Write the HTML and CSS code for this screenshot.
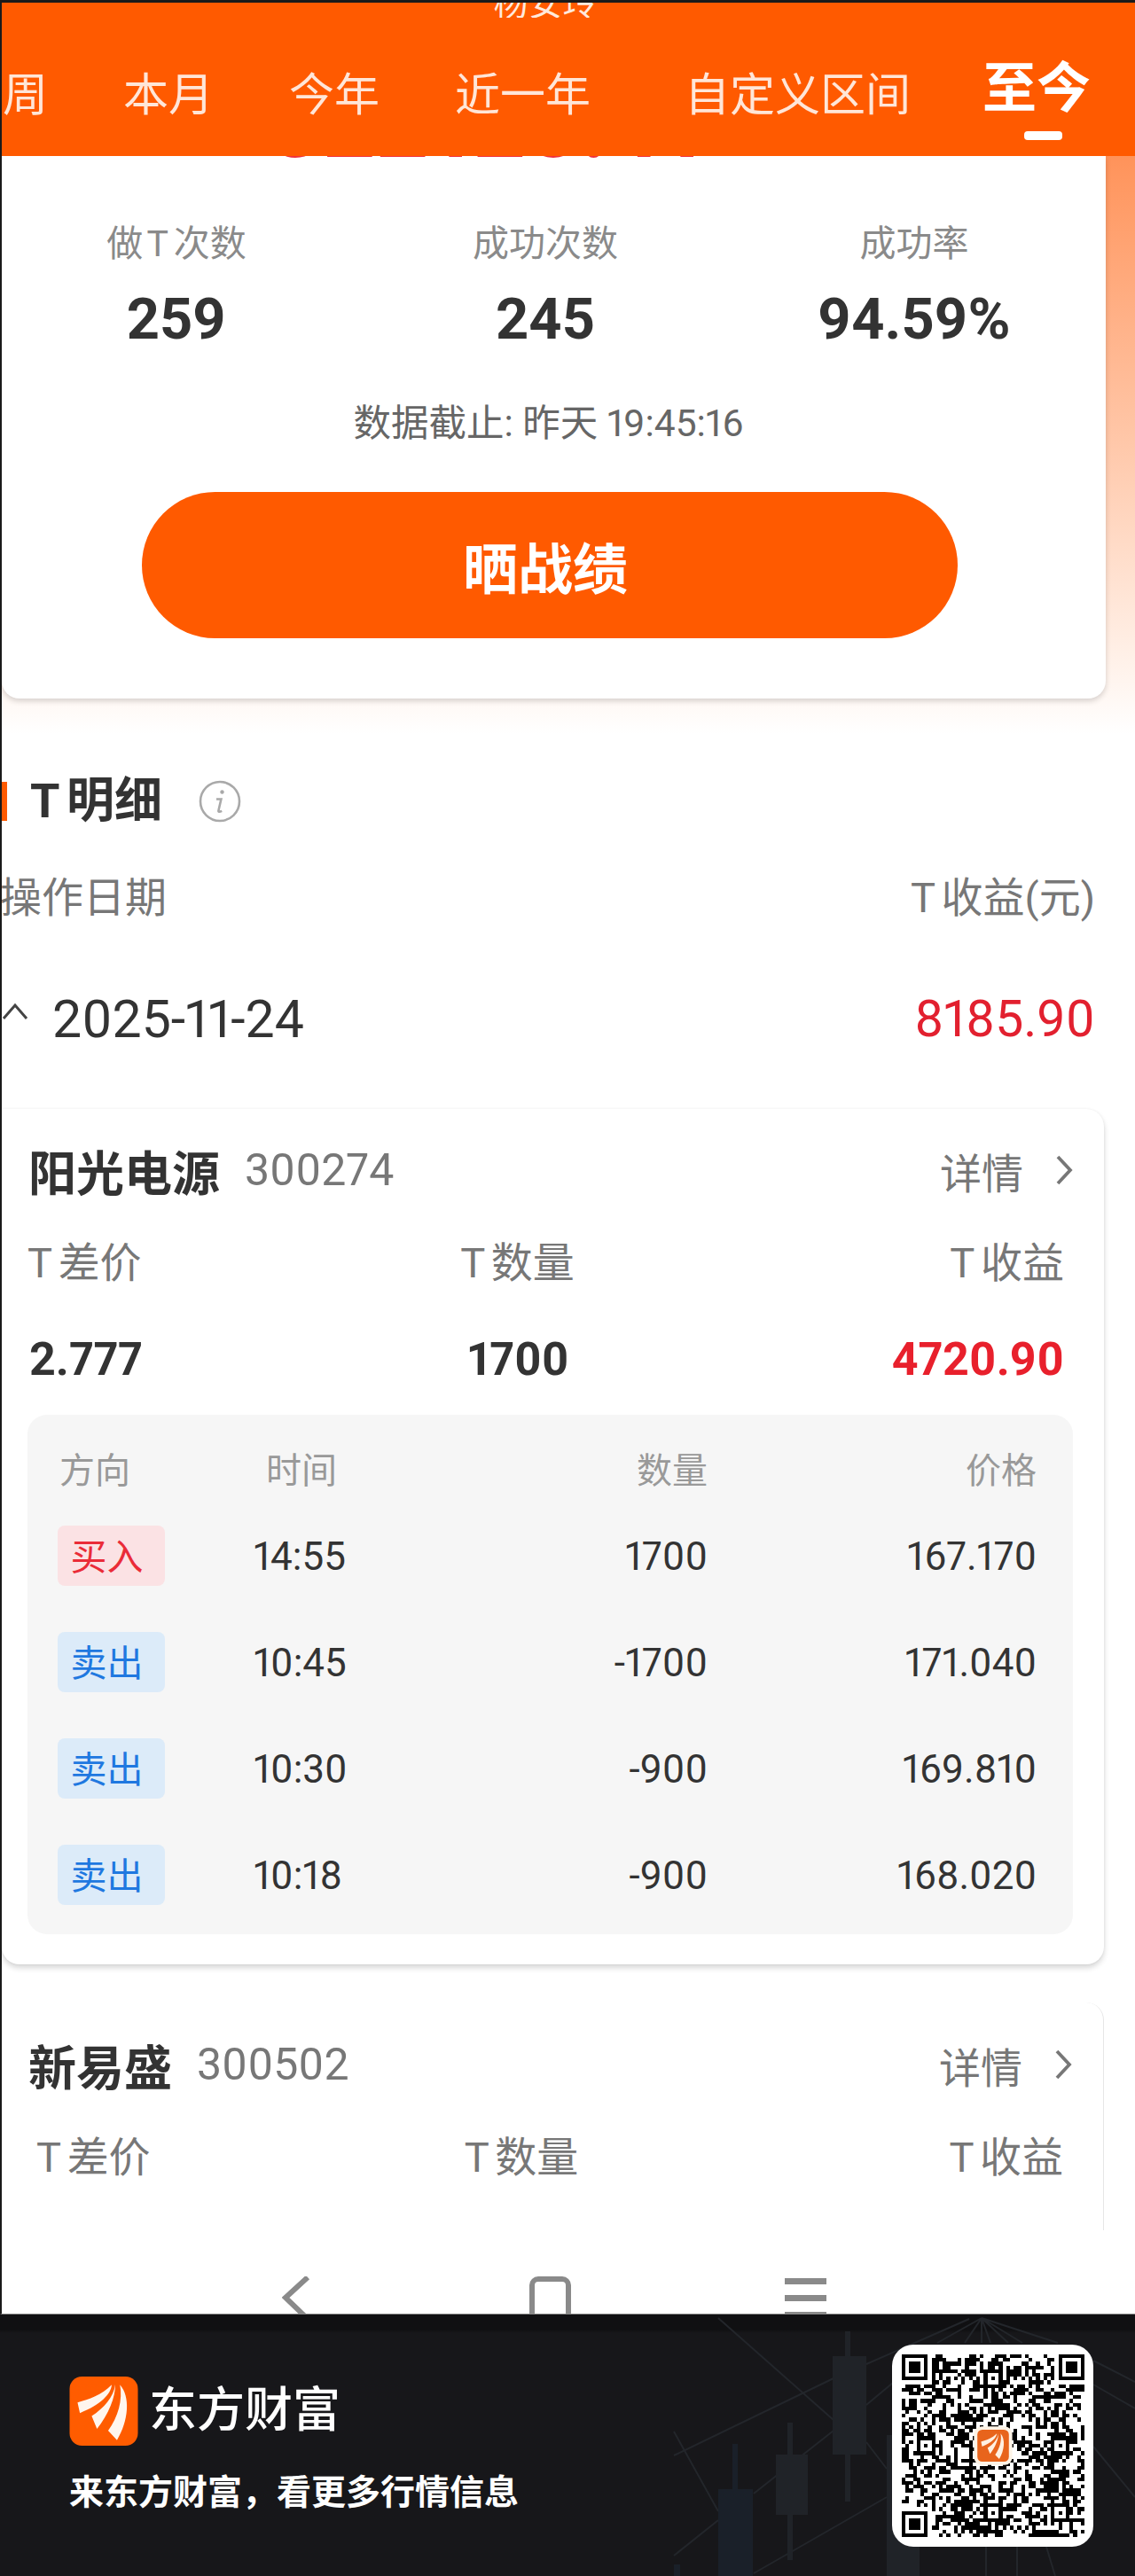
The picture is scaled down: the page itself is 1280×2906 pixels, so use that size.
FILE: index.html
```html
<!DOCTYPE html>
<html lang="zh-CN">
<head>
    <meta charset="UTF-8">
    <meta name="viewport" content="width=device-width, initial-scale=1.0">
    <title>做T战绩</title>
    <link rel="stylesheet" href="styles.css">
</head>
<body>
    <div class="phone">
        <div class="top">
            <div class="top-name"><span>杨安玲</span></div>
            <div class="tabs">
                <span class="tab">周</span>
                <span class="tab">本月</span>
                <span class="tab">今年</span>
                <span class="tab">近一年</span>
                <span class="tab tab-custom">自定义区间</span>
                <span class="tab tab-active">至今</span>
            </div>
        </div>

        <div class="summary-bg">
            <div class="summary">
                <div class="peek"><span>322128.41</span></div>
                <div class="stats">
                    <div class="stat"><p class="stat-label">做<span class="t t-both">T</span>次数</p><p class="stat-value">259</p></div>
                    <div class="stat"><p class="stat-label">成功次数</p><p class="stat-value">245</p></div>
                    <div class="stat"><p class="stat-label">成功率</p><p class="stat-value">94.59%</p></div>
                </div>
                <p class="deadline">数据截止: 昨天 19:45:16</p>
                <button class="share-btn">晒战绩</button>
            </div>
        </div>

        <div class="section-title">
            <span class="section-mark"></span>
            <h3><span class="t">T</span>明细</h3>
            <svg class="info-icon" viewBox="0 0 48 48" width="48" height="48">
                <circle cx="24" cy="24" r="22" fill="none" stroke="#a9a9a9" stroke-width="2.6"/>
                <circle cx="26.5" cy="13.5" r="2.2" fill="#a9a9a9"/>
                <path d="M20 21.5h5.4l-3 13c-.3 1.4 1 1.8 3.8.4" fill="none" stroke="#a9a9a9" stroke-width="2.6"/>
            </svg>
        </div>

        <div class="list-head">
            <span class="list-head-date">操作日期</span>
            <span><span class="t">T</span>收益(元)</span>
        </div>

        <div class="date-row">
            <svg class="date-arrow" viewBox="0 0 30 20" width="30" height="20">
                <path d="M2 18 15 3l13 15" fill="none" stroke="#444" stroke-width="3"/>
            </svg>
            <span class="date-text">2025-11-24</span>
            <span class="date-amount">8185.90</span>
        </div>

        <div class="stock-card">
            <div class="stock-head">
                <span class="stock-name">阳光电源</span>
                <span class="stock-code">300274</span>
                <span class="stock-more">详情</span>
                <svg class="stock-arrow" viewBox="0 0 20 34" width="20" height="34">
                    <path d="M3 2l14 15L3 32" fill="none" stroke="#777" stroke-width="3.8"/>
                </svg>
            </div>
            <div class="metric-labels">
                <span><span class="t">T</span>差价</span>
                <span class="metric-mid"><span class="t">T</span>数量</span>
                <span class="metric-end"><span class="t">T</span>收益</span>
            </div>
            <div class="metric-values">
                <span>2.777</span><span class="metric-mid">1700</span><span class="metric-end red">4720.90</span>
            </div>
            <div class="trades">
                <div class="trade trade-head">
                    <span class="dir">方向</span><span class="time">时间</span><span class="qty">数量</span><span class="price">价格</span>
                </div>
                <div class="trade">
                    <span class="dir"><span class="badge badge-buy">买入</span></span><span class="time">14:55</span><span class="qty">1700</span><span class="price">167.170</span>
                </div>
                <div class="trade">
                    <span class="dir"><span class="badge badge-sell">卖出</span></span><span class="time">10:45</span><span class="qty">-1700</span><span class="price">171.040</span>
                </div>
                <div class="trade">
                    <span class="dir"><span class="badge badge-sell">卖出</span></span><span class="time">10:30</span><span class="qty">-900</span><span class="price">169.810</span>
                </div>
                <div class="trade">
                    <span class="dir"><span class="badge badge-sell">卖出</span></span><span class="time">10:18</span><span class="qty">-900</span><span class="price">168.020</span>
                </div>
            </div>
        </div>

        <div class="stock-card stock-card-open">
            <div class="stock-head">
                <span class="stock-name">新易盛</span>
                <span class="stock-code">300502</span>
                <span class="stock-more">详情</span>
                <svg class="stock-arrow" viewBox="0 0 20 34" width="20" height="34">
                    <path d="M3 2l14 15L3 32" fill="none" stroke="#777" stroke-width="3.8"/>
                </svg>
            </div>
            <div class="metric-labels metric-labels-second">
                <span><span class="t">T</span>差价</span>
                <span class="metric-mid"><span class="t">T</span>数量</span>
                <span class="metric-end"><span class="t">T</span>收益</span>
            </div>
        </div>

        <div class="nav-bar">
            <svg viewBox="0 0 32 50" width="32" height="50"><path d="M29 1 4 24l25 24" fill="none" stroke="#8a8a8a" stroke-width="6"/></svg>
            <span class="nav-home"></span>
            <span class="nav-menu"></span>
        </div>
    </div>

    <footer class="footer">
        <svg class="footer-bg" viewBox="0 0 1280 295" width="1280" height="295">
            <g stroke="#23262b" stroke-width="2" fill="none">
                <path d="M810 4 940 119M977 144 1000 174M760 159 940 72M977 56 1093 5M977 102 1013 72M850 202 940 131M760 132 810 222M760 272 810 232M850 292 1000 206"/>
                <path d="M1107 4 1057 32M1107 4 1088 32M1107 4V32M1107 4 1117 32M1107 4 1137 32M1107 4 1153 32M1107 4 1193 32"/>
                <path d="M1233 52 1280 76M1233 79 1280 106M1233 149 1280 206M1112 262V295M1147 262V295M1180 262 1190 295"/>
            </g>
            <g fill="#202328">
                <rect x="953" y="19" width="6" height="192"/>
                <rect x="939" y="47" width="38" height="111"/>
                <rect x="888" y="122" width="6" height="155"/>
                <rect x="875" y="158" width="36" height="68"/>
                <rect x="1000" y="136" width="37" height="159"/>
            </g>
            <g fill="#1a2029">
                <rect x="826" y="146" width="6" height="60"/>
                <rect x="810" y="197" width="39" height="98"/>
                <rect x="760" y="282" width="7" height="13"/>
            </g>
        </svg>
        <div class="brand">
            <div class="brand-row">
                <svg class="brand-logo" viewBox="85 62 232 235" width="78" height="78">
                    <rect x="85" y="62" width="232" height="235" rx="42" fill="#ff5c00"/>
                    <path d="M112 150C150 140 195 125 228 90 226 122 190 158 120 186Z" fill="#fff6ee"/>
                    <path d="M240 88C242 130 216 192 178 240L160 196C200 170 236 130 240 88Z" fill="#fff6ee"/>
                    <path d="M256 90C292 130 286 212 246 278L216 246C250 200 266 140 256 90Z" fill="#fff6ee"/>
                </svg>
                <span class="brand-name">东方财富</span>
            </div>
            <p class="brand-slogan">来东方财富，看更多行情信息</p>
        </div>
        <div class="qr">
            <svg id="qr-code" class="qr-code" viewBox="0 0 49 49" width="206" height="206" shape-rendering="crispEdges"></svg>
            <svg class="qr-logo" viewBox="85 62 232 235" width="36" height="36">
                <rect x="60" y="38" width="282" height="283" rx="56" fill="#fdf3e6"/>
                <rect x="85" y="62" width="232" height="235" rx="36" fill="#e8641c"/>
                <path d="M112 150C150 140 195 125 228 90 226 122 190 158 120 186Z" fill="#fff0e2"/>
                <path d="M240 88C242 130 216 192 178 240L160 196C200 170 236 130 240 88Z" fill="#fff0e2"/>
                <path d="M256 90C292 130 286 212 246 278L216 246C250 200 266 140 256 90Z" fill="#fff0e2"/>
            </svg>
        </div>
    </footer>

    <script src="qr.js"></script>
</body>
</html>
```

FILE: styles.css
```css
* { box-sizing: border-box; }

html, body {
    margin: 0;
    padding: 0;
}

body {
    width: 1280px;
    height: 2906px;
    overflow: hidden;
    background: #fff;
    font-family: Roboto, "Noto Sans CJK SC", sans-serif;
    font-feature-settings: "pnum";
    color: #333;
}

p, h3 { margin: 0; }

/* the T in labels sits apart from the chinese text */
.t { margin-right: 0.14em; }
.t-both { margin-left: 0.1em; }

.phone {
    height: 2611px;
    overflow: hidden;
    border-left: 2px solid #1a1a1a;
    border-top: 3px solid #1a1a1a;
    border-bottom: 1px solid #888;
    background: #fff;
}

/* orange header, name is cut off by the top of the shot */
.top {
    position: relative;
    height: 173px;
    background: #ff5a00;
    color: #fff;
}
.top-name {
    height: 17px;
    overflow: hidden;
    text-align: center;
    font-size: 39px;
    line-height: 38px;
    color: #ffe9dc;
    padding-right: 52px;
}
.top-name span {
    display: block;
    margin-top: -18px;
}
.tabs {
    display: flex;
    align-items: flex-start;
    gap: 85px;
    margin-left: 1px;
    margin-top: 58px;
    font-size: 51px;
    line-height: 60px;
    color: #ffe6d8;
}
.tab-custom { margin-left: 21px; }
.tab-active {
    position: relative;
    margin-left: -4px;
    margin-top: -13px;
    font-size: 61px;
    line-height: 70px;
    font-weight: 700;
    color: #fff;
}
.tab-active::after {
    content: "";
    position: absolute;
    left: 47px;
    top: 83px;
    width: 43px;
    height: 10px;
    border-radius: 4px;
    background: #fff;
}

/* summary card */
.summary-bg {
    height: 652px;
    padding-right: 33px;
    background: linear-gradient(#ff935a, #ffc8aa 50%, #fff2ea 88%, #fff);
}
.summary {
    height: 612px;
    background: #fff;
    border-radius: 0 0 20px 20px;
    box-shadow: 0 3px 6px rgba(0, 0, 0, 0.16);
}
.peek {
    height: 14px;
    overflow: hidden;
    text-align: center;
    font-size: 104px;
    line-height: 104px;
    font-weight: 700;
    color: #f0323c;
    padding-right: 150px;
}
.peek span {
    display: block;
    margin-top: -86px;
}
.stats {
    display: grid;
    grid-template-columns: repeat(3, 416px);
    margin-left: -11px;
    padding-top: 60px;
    text-align: center;
}
.stat-label {
    font-size: 41px;
    line-height: 50px;
    color: #8a8a8a;
}
.stat-value {
    margin-top: 26px;
    font-size: 65px;
    line-height: 68px;
    font-weight: 700;
}
.deadline {
    margin-top: 59px;
    padding-right: 12px;
    text-align: center;
    font-size: 42.5px;
    line-height: 50px;
    color: #666;
}
.share-btn {
    display: block;
    width: 920px;
    height: 165px;
    margin: 52px 0 0 158px;
    padding: 0 10px 0 0;
    border: none;
    border-radius: 83px;
    background: #ff5a00;
    color: #fff;
    font-family: inherit;
    font-size: 62px;
    font-weight: 700;
    cursor: pointer;
}

/* list part */
.section-title {
    display: flex;
    align-items: center;
    height: 50px;
    margin-top: 51px;
}
.section-mark {
    width: 6px;
    height: 44px;
    background: #ff5a00;
}
.section-title h3 {
    margin-left: 26px;
    font-size: 54px;
    line-height: 50px;
    font-weight: 700;
}
.info-icon { margin-left: 41px; }

.list-head {
    display: flex;
    justify-content: space-between;
    margin-top: 54px;
    padding-right: 45px;
    font-size: 47px;
    line-height: 60px;
    color: #777;
}
.list-head-date { margin-left: -2px; }

.date-row {
    display: flex;
    align-items: center;
    height: 70px;
    margin-top: 71px;
    padding-right: 45px;
}
.date-arrow { margin-top: -16px; }
.date-text {
    margin-left: 27px;
    font-size: 59px;
}
.date-amount {
    margin-left: auto;
    font-size: 57px;
    color: #e2202f;
}

.stock-card {
    width: 1243px;
    height: 965px;
    padding: 39px 35px 0 0;
    border-radius: 0 20px 20px 20px;
    background: #fff;
    box-shadow: 0 4px 6px rgba(0, 0, 0, 0.16), 0 0 3px rgba(0, 0, 0, 0.06);
    margin-top: 67px;
}
.stock-card-open {
    height: 257px;
    margin-top: 43px;
    padding-top: 40px;
    border-radius: 0 20px 0 0;
    border-right: 1px solid #e6e6e6;
    box-shadow: none;
}
.stock-head {
    display: flex;
    align-items: center;
    height: 60px;
    padding-left: 30px;
}
.stock-name {
    font-size: 54px;
    font-weight: 700;
}
.stock-code {
    margin-left: 28px;
    font-size: 50px;
    color: #777;
}
.stock-more {
    margin-left: auto;
    font-size: 47px;
    color: #777;
}
.stock-arrow { margin-left: 36px; }

.metric-labels, .metric-values {
    display: grid;
    grid-template-columns: 1fr 1fr 1fr;
    padding-right: 10px;
}
.metric-labels {
    margin: 45px 0 0 29px;
    font-size: 47px;
    line-height: 60px;
    color: #777;
}
.metric-labels-second {
    margin-top: 45px;
    margin-left: 39px;
}
.metric-values {
    margin: 49px 0 0 31px;
    font-size: 52px;
    line-height: 60px;
    font-weight: 700;
}
.metric-mid { text-align: center; padding-right: 64px; }
.metric-end { text-align: right; }
.red { color: #e8202c; }

.trades {
    margin: 32px 0 0 29px;
    height: 586px;
    padding: 31px 41px 0 34px;
    border-radius: 22px;
    background: #f6f6f6;
}
.trade {
    display: grid;
    grid-template-columns: 221px 1fr 280px 371px;
    align-items: center;
    height: 120px;
    font-size: 44px;
    color: #333;
}
.trade-head {
    height: 50px;
    margin-bottom: 19px;
    font-size: 40px;
    color: #999;
}
.trade-head .dir { padding-left: 2px; }
.trade-head .time { padding-left: 14px; }
.qty, .price { text-align: right; }
.badge {
    display: flex;
    align-items: center;
    justify-content: center;
    width: 121px;
    height: 68px;
    margin-top: -3px;
    padding: 0 10px 4px 0;
    border-radius: 8px;
    font-size: 41px;
}
.badge-buy { background: #fbe2e4; color: #ea2c38; }
.badge-sell { background: #dcebf9; color: #1f78e0; }

/* android nav bar, cut off by the banner */
.nav-bar {
    display: flex;
    align-items: flex-start;
    height: 70px;
    padding-left: 316px;
    margin-top: 52px;
}
.nav-home {
    width: 47px;
    height: 60px;
    margin-left: 247px;
    border: 6px solid #8a8a8a;
    border-radius: 10px;
}
.nav-menu {
    width: 47px;
    height: 7px;
    margin: 2px 0 0 241px;
    background: #8a8a8a;
    box-shadow: 0 19px 0 #8a8a8a, 0 38px 0 #8a8a8a;
}

/* banner */
.footer {
    position: relative;
    display: flex;
    justify-content: space-between;
    height: 295px;
    padding: 34px 47px 0 78px;
    overflow: hidden;
    background: linear-gradient(#101012, #101012 17px, #17171a 21px);
}
.footer-bg {
    position: absolute;
    left: 0;
    top: 0;
}
.brand, .qr { position: relative; }
.brand { padding-top: 36px; }
.brand-row {
    display: flex;
    align-items: center;
    gap: 12px;
}
.brand-name {
    font-size: 54px;
    line-height: 78px;
    font-weight: 500;
    color: #fff;
}
.brand-slogan {
    margin-top: 28px;
    font-size: 39px;
    line-height: 50px;
    font-weight: 700;
    color: #fff;
}
.qr {
    width: 227px;
    height: 228px;
    display: flex;
    align-items: center;
    justify-content: center;
    border-radius: 24px;
    background: #fff;
}
.qr-logo {
    position: absolute;
    left: 96px;
    top: 96px;
    overflow: visible;
}
```

FILE: qr.js
```js
// fills the qr square: version 8 layout (finders, timing, alignment) with fixed pseudo random data
(function() {
    var size = 49;
    var seed = 20251124;
    var align = [6, 24, 42];
    var d = "";

    function next() {
        seed = (seed * 1664525 + 1013904223) % 4294967296;
        return seed / 4294967296;
    }

    function inFinder(x, y) {
        return (x < 8 && y < 8) || (x >= size - 8 && y < 8) || (x < 8 && y >= size - 8);
    }

    function alignAt(x, y) {
        for (var i = 0; i < 3; i++) {
            for (var j = 0; j < 3; j++) {
                if (inFinder(align[i], align[j])) continue;
                if (Math.abs(x - align[i]) <= 2 && Math.abs(y - align[j]) <= 2) {
                    return Math.max(Math.abs(x - align[i]), Math.abs(y - align[j])) !== 1;
                }
            }
        }
        return null;
    }

    function ring(ox, oy) {
        d += "M" + ox + " " + oy + "h7v7h-7zM" + (ox + 1) + " " + (oy + 1) + "v5h5v-5z";
        d += "M" + (ox + 2) + " " + (oy + 2) + "h3v3h-3z";
    }

    for (var y = 0; y < size; y++) {
        for (var x = 0; x < size; x++) {
            var v = next();
            if (inFinder(x, y)) continue;
            var a = alignAt(x, y);
            var dark = v < 0.52;
            if (a !== null) dark = a;
            else if (y === 6) dark = x % 2 === 0;
            else if (x === 6) dark = y % 2 === 0;
            if (dark) d += "M" + x + " " + y + "h1v1h-1z";
        }
    }

    ring(0, 0);
    ring(size - 7, 0);
    ring(0, size - 7);

    var path = document.createElementNS("http://www.w3.org/2000/svg", "path");
    path.setAttribute("d", d);
    path.setAttribute("fill", "#000");
    path.setAttribute("fill-rule", "evenodd");
    document.getElementById("qr-code").appendChild(path);
})();
```
